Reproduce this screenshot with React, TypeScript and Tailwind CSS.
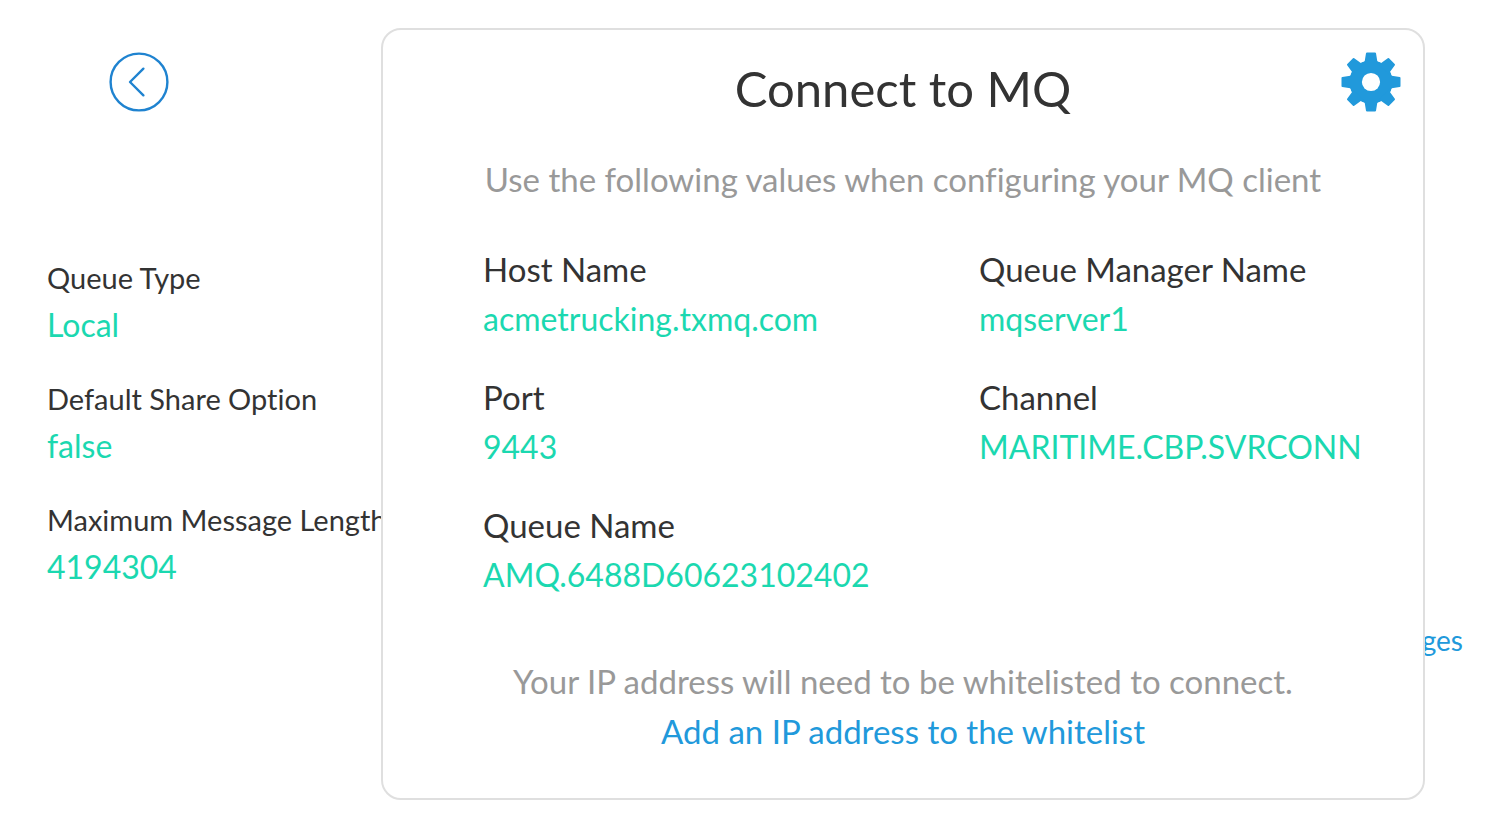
import React from "react";

const queueDetails = [
  { label: "Queue Type", value: "Local" },
  { label: "Default Share Option", value: "false" },
  { label: "Maximum Message Length", value: "4194304" },
];

const connection = [
  { label: "Host Name", value: "acmetrucking.txmq.com" },
  { label: "Queue Manager Name", value: "mqserver1" },
  { label: "Port", value: "9443" },
  { label: "Channel", value: "MARITIME.CBP.SVRCONN" },
  { label: "Queue Name", value: "AMQ.6488D60623102402" },
];

const teeth = [0, 45, 90, 135, 180, 225, 270, 315];

function BackIcon() {
  return (
    <svg viewBox="0 0 60 60" className="size-[60px]" fill="none" stroke="#1f83d0" strokeWidth="2.4" aria-hidden="true">
      <circle cx="30" cy="30" r="28.4" />
      <path d="M34.4 16.7 21 30l13.4 13.3" strokeLinecap="round" strokeLinejoin="round" />
    </svg>
  );
}

function GearIcon() {
  return (
    <svg viewBox="-30 -30 60 60" className="size-[60px]" fill="#2199db" aria-hidden="true">
      <circle r="21.6" />
      {teeth.map((angle) => (
        <path
          key={angle}
          d="M-6.3-20.7-10.5-18h21L6.3-20.7 5-28.7Q4.8-29.5 4-29.5h-8Q-4.8-29.5-5-28.7z"
          transform={`rotate(${angle})`}
        />
      ))}
      <circle r="9.1" fill="#fff" />
    </svg>
  );
}

function ConnectDialog() {
  return (
    <section
      role="dialog"
      aria-labelledby="connect-title"
      className="absolute top-7 right-[73px] left-[381px] rounded-[20px] border-2 border-[#dfdfdf] bg-white pt-[33px] pb-[42px] text-[33px] leading-[50px]"
    >
      <button type="button" aria-label="Settings" className="absolute top-[22px] right-[22px]">
        <GearIcon />
      </button>
      <h1 id="connect-title" className="text-center text-[49px] leading-[50px]">
        Connect to MQ
      </h1>
      <p className="mt-[41px] text-center text-[#999]">Use the following values when configuring your MQ client</p>
      <dl className="mt-10 grid grid-cols-2 gap-y-7 pl-[100px]">
        {connection.map((item) => (
          <div key={item.label} className="whitespace-nowrap even:pl-[26px]">
            <dt>{item.label}</dt>
            <dd className="text-[32px] text-[#1bd8b0]">{item.value}</dd>
          </div>
        ))}
      </dl>
      <div className="mt-14 text-center">
        <p className="text-[#999]">Your IP address will need to be whitelisted to connect.</p>
        <a href="#whitelist" className="text-[#2199db]">
          Add an IP address to the whitelist
        </a>
      </div>
    </section>
  );
}

export default function App() {
  return (
    <div className="relative min-h-screen overflow-hidden bg-white font-['Lato',sans-serif] text-[#333] [font-variant-ligatures:none]">
      <main className="flex flex-col pt-[52px]">
        <button type="button" aria-label="Back" className="ml-[109px] self-start">
          <BackIcon />
        </button>
        <dl className="mt-[143px] flex flex-col gap-7 pl-[47px]">
          {queueDetails.map((item) => (
            <div key={item.label}>
              <dt className="text-[29px] leading-[46px]">{item.label}</dt>
              <dd className="text-[32px] leading-[47px] text-[#1bd8b0]">{item.value}</dd>
            </div>
          ))}
        </dl>
        <a href="#messages" className="mt-8 mr-[35px] self-end text-[28px] leading-9 text-[#2199db]">
          Messages
        </a>
      </main>
      <ConnectDialog />
    </div>
  );
}
